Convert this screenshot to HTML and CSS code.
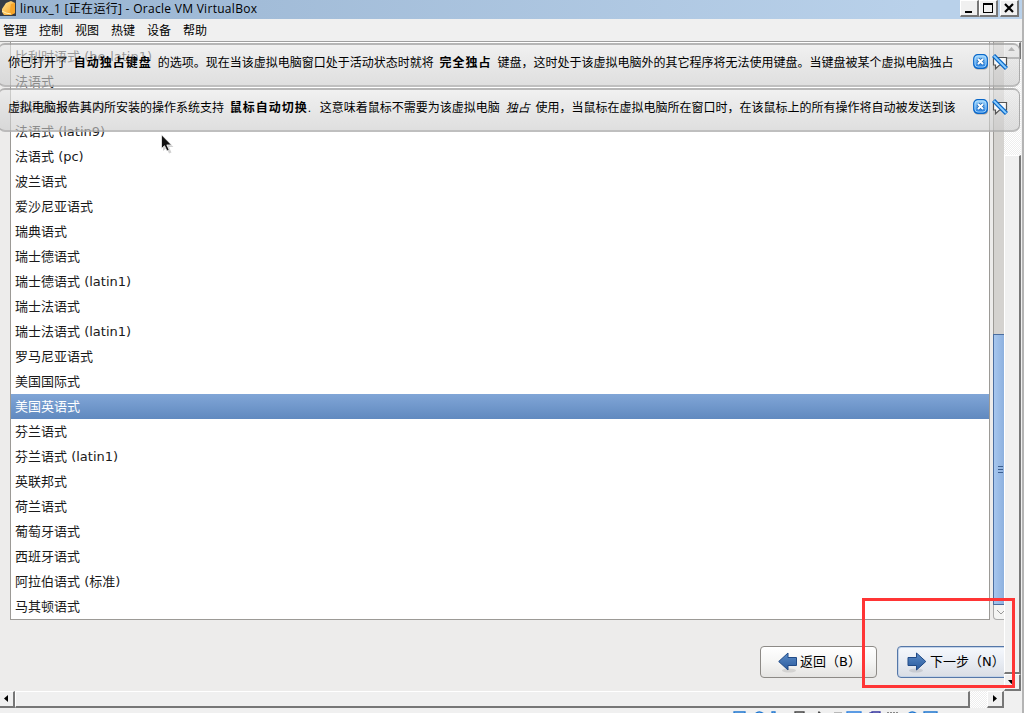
FILE: index.html
```html
<!DOCTYPE html>
<html lang="zh-CN">
<head>
<meta charset="utf-8">
<title>linux_1 [正在运行] - Oracle VM VirtualBox</title>
<link rel="stylesheet" href="styles.css">
</head>
<body>
<svg class="defs" width="0" height="0">
  <defs>
    <linearGradient id="blue" x1="0" y1="0" x2="0" y2="1"><stop offset="0" stop-color="#a8dcff"/><stop offset="1" stop-color="#1673dc"/></linearGradient>
    <linearGradient id="navy" x1="0" y1="0" x2="0" y2="1"><stop offset="0" stop-color="#5b8cc8"/><stop offset="1" stop-color="#2a5a9c"/></linearGradient>
    <linearGradient id="box" x1="0" y1="0" x2="1" y2="1"><stop offset="0" stop-color="#ffe69a"/><stop offset="1" stop-color="#f59a16"/></linearGradient>
    <symbol id="close" viewBox="0 0 16 16">
      <rect x="1" y="1.5" width="14" height="14" rx="4" fill="#777" opacity=".6"/>
      <rect x=".7" y=".7" width="13.6" height="13.6" rx="4" fill="url(#blue)" stroke="#0a67c9" stroke-width="1.2"/>
      <rect x="2" y="2" width="11" height="11" rx="3" fill="none" stroke="#b5e2ff" stroke-width=".8"/>
      <path d="M5 5l5 5M10 5l-5 5" stroke="#246bb5" stroke-width="3.6"/>
      <path d="M5 5l5 5M10 5l-5 5" stroke="#fff" stroke-width="2"/>
    </symbol>
    <symbol id="mute" viewBox="0 0 16 16">
      <path d="M2.500 3.500h12v7.500H7.500l-4 3.800v-3.800H1.500v-7z" fill="#f8f8f8" stroke="#555" stroke-width="1.200"/>
      <path d="M1.500 1.500l13 13" stroke="#0866c6" stroke-width="4.400"/>
      <path d="M1.900 1.900l12.200 12.200" stroke="#8dceff" stroke-width="2"/>
    </symbol>
  </defs>
</svg>
<div class="window">
  <header class="titlebar">
    <svg class="app" width="16" height="16" viewBox="0 0 16 16"><rect width="16" height="16" fill="#343b46"/><path d="M2 9l4-6 5-2 4 2v10l-4 2H4l-2-3z" fill="url(#box)"/><path d="M11 4l4-1v10l-4 2-1-5z" fill="#f7a528"/><path d="M2 11l4 2 5 1" fill="none" stroke="#fff0b8"/></svg>
    <span class="title">linux_1 [正在运行] - Oracle VM VirtualBox</span>
    <div class="controls">
      <span class="ctl"><svg width="16" height="14"><path d="M4 10h7v2H4z"/></svg></span>
      <span class="ctl"><svg width="16" height="14"><path d="M3 2h10v10H3zM4 4v7h8V4z" fill-rule="evenodd"/></svg></span>
      <span class="ctl gap"><svg width="16" height="14"><path d="M4 3l8 8M12 3l-8 8" stroke="#000" stroke-width="2.200"/></svg></span>
    </div>
  </header>
  <nav class="menu"><span>管理</span><span>控制</span><span>视图</span><span>热键</span><span>设备</span><span>帮助</span></nav>
  <main class="view">
    <section class="guest">
      <div class="listwrap">
        <ul class="list">
          <li>比利时语式 (be-latin1)</li><li>法语式</li><li>法语式 (latin1)</li><li>法语式 (latin9)</li><li>法语式 (pc)</li><li>波兰语式</li><li>爱沙尼亚语式</li><li>瑞典语式</li><li>瑞士德语式</li><li>瑞士德语式 (latin1)</li><li>瑞士法语式</li><li>瑞士法语式 (latin1)</li><li>罗马尼亚语式</li><li>美国国际式</li><li class="selected">美国英语式</li><li>芬兰语式</li><li>芬兰语式 (latin1)</li><li>英联邦式</li><li>荷兰语式</li><li>葡萄牙语式</li><li>西班牙语式</li><li>阿拉伯语式 (标准)</li><li>马其顿语式</li>
        </ul>
        <div class="gscroll">
          <div class="gtrack"></div>
          <div class="gthumb"><i></i><i></i><i></i></div>
          <div class="gdown"><svg width="10" height="14"><path d="M3 5l4 4 4-4" fill="none" stroke="#999"/></svg></div>
        </div>
      </div>
      <div class="actions">
        <div class="btn back"><svg width="20" height="22" viewBox="0 0 20 22"><ellipse cx="11" cy="18.500" rx="7" ry="2" fill="#000" opacity=".1"/><path d="M.7 9.500L10 1v4.500h8.500v8H10V18z" fill="url(#navy)" stroke="#204a87"/></svg><span>返回（B）</span></div>
        <div class="btn next"><svg width="20" height="22" viewBox="0 0 20 22"><ellipse cx="9" cy="18.500" rx="7" ry="2" fill="#000" opacity=".1"/><path d="M18.800 9.500L9.500 1v4.500H1v8h8.500V18z" fill="url(#navy)" stroke="#204a87"/></svg><span>下一步（N）</span></div>
      </div>
    </section>
    <div class="vscroll">
      <div class="sbtn"><svg width="13" height="13"><path d="M3 8h7L6.500 4z" fill="#606060"/></svg></div>
      <div class="vtrack"></div>
      <div class="vthumb"></div>
      <div class="sbtn"><svg width="13" height="13"><path d="M3 5h7L6.500 9z"/></svg></div>
    </div>
    <div class="notes">
      <div class="note"><p>你已打开了 <b>自动独占键盘</b> 的选项。现在当该虚拟电脑窗口处于活动状态时就将 <b>完全独占</b> 键盘，这时处于该虚拟电脑外的其它程序将无法使用键盘。当键盘被某个虚拟电脑独占</p><svg width="16" height="16"><use href="#close"/></svg><svg width="16" height="16"><use href="#mute"/></svg></div>
      <div class="note"><p>虚拟电脑报告其内所安装的操作系统支持 <b>鼠标自动切换</b><span class="dot">.</span>这意味着鼠标不需要为该虚拟电脑 <em>独占</em> 使用，当鼠标在虚拟电脑所在窗口时，在该鼠标上的所有操作将自动被发送到该</p><svg width="16" height="16"><use href="#close"/></svg><svg width="16" height="16"><use href="#mute"/></svg></div>
    </div>
    <svg class="cursor" width="13" height="21" viewBox="0 0 13 21"><path d="M2 3v14l3.500-3 2.500 5.500 2.500-1-2.500-5.500h4.500z" fill="#000" opacity=".18"/><path d="M.5.8v13.700l3-2.800 2.500 5.300 2.200-1-2.400-5.100h4.700z" fill="#111" stroke="#fff" stroke-width=".7"/></svg>
    <div class="highlight"></div>
  </main>
  <div class="hscroll">
    <div class="sbtn left"><svg width="12" height="12"><path d="M8 3v7L4 6.500z"/></svg></div>
    <div class="hthumb"></div>
    <div class="htrack"></div>
    <div class="sbtn right"><svg width="13" height="12"><path d="M5 3v7l4-3.500z"/></svg></div>
  </div>
  <footer class="status">
    <svg width="210" height="3" viewBox="0 0 210 3" fill="none" stroke-width="1.300">
      <path d="M2 3V1h11v2M23 3q4-4 9 0M40 3V1h3v2h2" stroke="#1d75cf"/>
      <path d="M63 3V1h9v2M86 3l1-2 2 2" stroke="#444"/>
      <path d="M102 2h8" stroke="#999"/>
      <path d="M115 3V1h14v2" stroke="#2a7fe0"/>
      <path d="M137 3l1-1h2V1h8v2" stroke="#3535a0"/>
      <path d="M155 2h11" stroke="#888" stroke-width="2" stroke-dasharray="2 1"/>
      <path d="M176 3q4-4 9 0M192 3V1h13v2" stroke="#1d75cf"/>
    </svg>
  </footer>
</div>
</body>
</html>
```
FILE: styles.css
```css
* { box-sizing: border-box; }
body { margin: 0; overflow: hidden; background: #f0f0f0; color: #000; font-family: "Liberation Sans", "Noto Sans CJK SC", sans-serif; font-size: 12px; }
svg { display: block; flex: none; }
.defs { position: absolute; }
.window { width: 1024px; height: 713px; display: flex; flex-direction: column; border-right: 2px solid #b4b4b4; }
.titlebar { height: 19px; flex: none; display: flex; align-items: flex-start; background: linear-gradient(90deg, #99b4d1, #b9d1ea 90%); padding-right: 3px; }
.title { margin-left: 4px; line-height: 18px; white-space: nowrap; letter-spacing: .29px; font-family: "Open Sans", "Noto Sans CJK SC", sans-serif; }
.controls { display: flex; margin-left: auto; }
.ctl { width: 19px; height: 17px; background: #f0f0f0; border: solid; border-width: 1px 2px 2px 1px; border-color: #fff #777 #777 #fff; }
.ctl.gap { margin-left: 2px; }
.menu { height: 23px; flex: none; display: flex; gap: 12px; padding-left: 3px; line-height: 25px; border-bottom: 1px solid #a0a0a0; }
.view { position: relative; height: 649px; flex: none; display: flex; }
.guest { width: 1004px; flex: none; background: #edeceb; padding-left: 10px; overflow: hidden; }
.listwrap { display: flex; gap: 3px; height: 578px; }
.list { width: 980px; flex: none; margin: 0; padding: 2px 0 0; list-style: none; background: #fff; border: 1px solid #9c9a96; border-top: 0; font-family: "DejaVu Sans", "Noto Sans CJK SC", sans-serif; font-size: 13px; color: #1a1a1a; }
.list li { height: 25px; line-height: 26px; padding-left: 4px; white-space: nowrap; }
.list .selected { color: #fff; background: linear-gradient(#81a6d7, #6089bf); }
.gscroll { width: 16px; flex: none; display: flex; flex-direction: column; }
.gtrack { height: 292px; background: #d4d2cf; border-left: 1px solid #9c9a96; }
.gthumb { height: 271px; border: 1px solid #4a6d9f; border-right: 0; background: linear-gradient(90deg, #a6c6ee, #81a6d7); display: flex; flex-direction: column; justify-content: center; gap: 2px; padding-left: 4px; }
.gthumb i { width: 5px; height: 1px; background: #3c5f91; }
.gdown { height: 15px; border: 1px solid #aaa; border-top: 0; border-radius: 0 0 0 4px; background: #f4f4f3; }
.actions { display: flex; gap: 20px; padding: 26px 0 0 750px; }
.btn { flex: none; width: 117px; height: 32px; border: 1px solid #8d8a86; border-radius: 4px; background: linear-gradient(#fff, #f5f5f4 50%, #e5e4e2); display: flex; align-items: center; padding: 1px 0 0 17px; gap: 2px; font-family: "DejaVu Sans", "Noto Sans CJK SC", sans-serif; font-size: 13px; white-space: nowrap; }
.btn span { padding-bottom: 4px; }
.next { border-color: #5577a8; padding-left: 9px; gap: 3px; background: linear-gradient(#f5f8fd, #e8ecf3 50%, #d9dde4); box-shadow: inset 0 0 0 1px #c3d3e8; }
.vscroll { width: 17px; flex: none; display: flex; flex-direction: column; }
.sbtn, .vthumb, .hthumb { background: #f0f0f0; border: solid; border-width: 1px 2px 2px 1px; border-color: #fff #777 #777 #fff; }
.sbtn { width: 17px; height: 17px; flex: none; }
.vtrack, .htrack { background: repeating-conic-gradient(#fff 0 25%, #eee 0 50%) 0 0 / 2px 2px; }
.vtrack { height: 96px; }
.vthumb { height: 519px; }
.notes { position: absolute; left: -2px; top: 1px; width: 1022px; display: flex; flex-direction: column; gap: 1px; }
.note { height: 44px; display: flex; align-items: flex-start; gap: 3px; padding: 10px 11px 0 9px; border: 1px solid #aaa; border-top: 2px solid rgba(130,130,130,.45); border-bottom: 2px solid rgba(130,130,130,.45); border-radius: 7px; background: linear-gradient(rgba(232,232,232,.63), rgba(204,204,204,.63)); }
.note p { flex: 1; margin: 0; line-height: 16px; white-space: nowrap; word-spacing: 2.5px; }
.note b { letter-spacing: 1px; }
.note svg { position: relative; top: -1px; }
.dot { display: inline-block; width: 12px; }
.cursor { position: absolute; left: 161px; top: 92px; }
.highlight { position: absolute; left: 862px; top: 556px; width: 153px; height: 90px; border: 3px solid #ff3535; }
.hscroll { height: 17px; flex: none; display: flex; }
.left { width: 15px; border-left: 0; }
.hthumb { width: 955px; height: 17px; }
.htrack { width: 17px; height: 17px; }
.status { height: 5px; padding: 3px 0 0 732px; overflow: hidden; }
```
